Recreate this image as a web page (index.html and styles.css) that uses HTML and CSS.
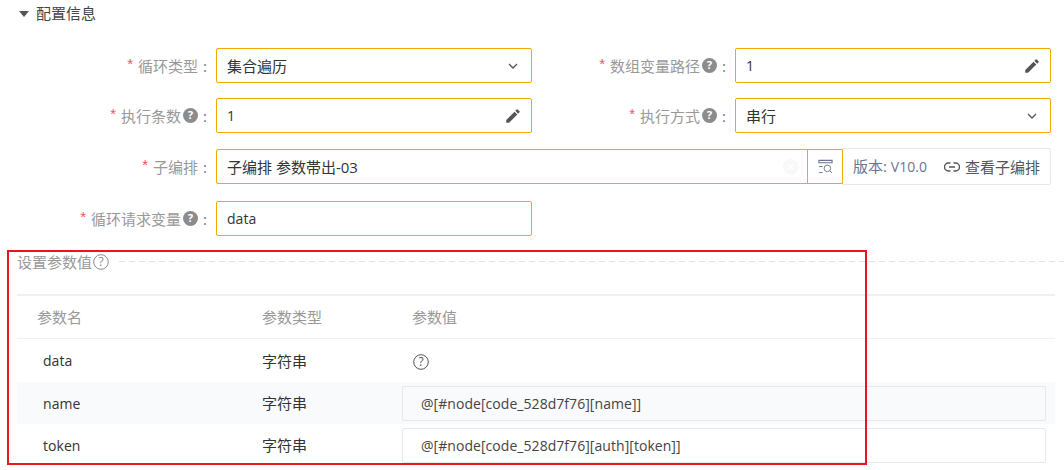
FILE: index.html
```html
<!DOCTYPE html>
<html lang="zh">
<head>
<meta charset="utf-8">
<title>配置信息</title>
<link rel="stylesheet" href="styles.css">
</head>
<body>
<main class="page">
  <header class="section-head">
    <svg class="caret" viewBox="0 0 10 6" width="10" height="6"><path d="M0 0h10L5 6z" fill="#555"/></svg>
    <span>配置信息</span>
  </header>

  <section class="form">
    <div class="row">
      <div class="field">
        <label class="label"><i class="req">*</i>循环类型<b class="colon">:</b></label>
        <div class="control">
          <span class="val">集合遍历</span>
          <svg class="chev" viewBox="0 0 10 6" width="10" height="6"><path d="M1 1l4 4 4-4" fill="none" stroke="#555" stroke-width="1.3"/></svg>
        </div>
      </div>
      <div class="field">
        <label class="label"><i class="req">*</i>数组变量路径<svg class="qf" viewBox="0 0 16 16" width="15" height="15"><circle cx="8" cy="8" r="8" fill="#8c8c8c"/><text x="8" y="12" text-anchor="middle">?</text></svg><b class="colon">:</b></label>
        <div class="control">
          <span class="val latin">1</span>
          <svg class="pen" viewBox="0 0 24 24" width="18" height="18"><path fill="#555" d="M3 17.25V21h3.75L17.81 9.94l-3.75-3.75L3 17.25zM20.71 7.04a1 1 0 0 0 0-1.41l-2.34-2.34a1 1 0 0 0-1.41 0l-1.83 1.83 3.75 3.75 1.83-1.83z"/></svg>
        </div>
      </div>
    </div>

    <div class="row">
      <div class="field">
        <label class="label"><i class="req">*</i>执行条数<svg class="qf" viewBox="0 0 16 16" width="15" height="15"><circle cx="8" cy="8" r="8" fill="#8c8c8c"/><text x="8" y="12" text-anchor="middle">?</text></svg><b class="colon">:</b></label>
        <div class="control">
          <span class="val latin">1</span>
          <svg class="pen" viewBox="0 0 24 24" width="18" height="18"><path fill="#555" d="M3 17.25V21h3.75L17.81 9.94l-3.75-3.75L3 17.25zM20.71 7.04a1 1 0 0 0 0-1.41l-2.34-2.34a1 1 0 0 0-1.41 0l-1.83 1.83 3.75 3.75 1.83-1.83z"/></svg>
        </div>
      </div>
      <div class="field">
        <label class="label"><i class="req">*</i>执行方式<svg class="qf" viewBox="0 0 16 16" width="15" height="15"><circle cx="8" cy="8" r="8" fill="#8c8c8c"/><text x="8" y="12" text-anchor="middle">?</text></svg><b class="colon">:</b></label>
        <div class="control">
          <span class="val">串行</span>
          <svg class="chev" viewBox="0 0 10 6" width="10" height="6"><path d="M1 1l4 4 4-4" fill="none" stroke="#555" stroke-width="1.3"/></svg>
        </div>
      </div>
    </div>

    <div class="row row-wide">
      <label class="label"><i class="req">*</i>子编排<b class="colon">:</b></label>
      <div class="control control-wide">
        <span class="val">子编排 参数帯出-03</span>
        <span class="clear"><svg viewBox="0 0 16 16" width="16" height="16"><circle cx="8" cy="8" r="8" fill="#f8f8f8"/><path d="M5.500 5.500l5 5m0-5l-5 5" stroke="#fff" stroke-width="1.400"/></svg></span>
        <span class="pick">
          <svg viewBox="0 0 16 16" width="15" height="15" fill="none" stroke="#6b7690"><path d="M1 1.500h14v2.500H1z" stroke-width="1.200"/><path d="M1 8h4M1 14.500h4" stroke-width="1"/><circle cx="10" cy="10" r="3.500" stroke-width="1"/><path d="M12.500 12.500l2.500 2.500" stroke-width="1"/></svg>
        </span>
      </div>
      <div class="addon">
        <span class="ver">版本: <span class="latin">V10.0</span></span>
        <span class="view">
          <svg viewBox="0 0 16 10" width="16" height="10" fill="none" stroke="#555" stroke-width="1.400"><path d="M6.500 1H4.500a4 4 0 0 0 0 8h2M9.500 1h2a4 4 0 0 1 0 8h-2M5 5h6"/></svg>
          查看子编排
        </span>
      </div>
    </div>

    <div class="row row-last">
      <div class="field">
        <label class="label"><i class="req">*</i>循环请求变量<svg class="qf" viewBox="0 0 16 16" width="15" height="15"><circle cx="8" cy="8" r="8" fill="#8c8c8c"/><text x="8" y="12" text-anchor="middle">?</text></svg><b class="colon">:</b></label>
        <div class="control"><span class="val latin">data</span></div>
      </div>
    </div>
  </section>

  <section class="params">
    <div class="divider">
      <span class="divider-title">设置参数值<svg viewBox="0 0 16 16" width="16" height="16" fill="none"><circle cx="8" cy="8" r="7.300" stroke="#8c8c8c"/><text x="8" y="12" text-anchor="middle" class="qo">?</text></svg></span>
      <span class="dash"></span>
    </div>
    <div class="table">
      <div class="tr th">
        <span class="c1">参数名</span><span class="c2">参数类型</span><span class="c3">参数值</span>
      </div>
      <div class="tr td">
        <span class="c1 name latin">data</span><span class="c2">字符串</span>
        <span class="c3 qcell"><svg viewBox="0 0 16 16" width="16" height="16" fill="none"><circle cx="8" cy="8" r="7.300" stroke="#555"/><text x="8" y="12" text-anchor="middle" class="qd">?</text></svg></span>
      </div>
      <div class="tr td alt">
        <span class="c1 name latin nudge">name</span><span class="c2">字符串</span>
        <span class="c3 inbox latin">@[#node[code_528d7f76][name]]</span>
      </div>
      <div class="tr td">
        <span class="c1 name latin nudge">token</span><span class="c2">字符串</span>
        <span class="c3 inbox latin">@[#node[code_528d7f76][auth][token]]</span>
      </div>
    </div>
  </section>
  <div class="highlight"></div>
</main>
</body>
</html>
```
FILE: styles.css
```css
* { box-sizing: border-box; }
html, body { margin: 0; padding: 0; background: #fff; overflow: hidden; }
body { width: 1064px; height: 470px; font: 15px/20px "Open Sans", "Noto Sans CJK SC", sans-serif; color: #333; }
.page { position: relative; height: 470px; overflow: hidden; }
.latin { font-size: 14px; letter-spacing: .05px; }

.section-head { display: flex; align-items: center; gap: 7px; height: 28px; padding-left: 19px; color: #444; }
.section-head span { position: relative; top: -1px; }

.form { padding-top: 20px; }
.row { display: flex; height: 35px; margin-bottom: 15px; }
.row:nth-child(2) { margin-bottom: 16px; }
.row-wide { margin-bottom: 17px; }
.row-last { margin-bottom: 0; }
.field { display: flex; }
.field + .field .label { width: 203px; }
.label { width: 216px; display: flex; align-items: center; justify-content: flex-end; color: #999; padding-right: 8px; white-space: nowrap; }
.req { color: #f5515f; font-style: normal; margin-right: 5px; font-family: "Liberation Sans", sans-serif; position: relative; top: -2px; }
.colon { font-weight: 400; color: #6b7690; margin-left: 5px; width: 5px; }
.qf { margin-left: 2px; }
.qf text { font: 700 12px "Open Sans", sans-serif; fill: #fff; }
.control { width: 316px; height: 35px; border: 1px solid #f5a800; border-radius: 2px; display: flex; align-items: center; justify-content: space-between; padding: 0 12px 0 10px; color: #333; }
.control-wide { width: 627px; padding-right: 0; border-radius: 2px 0 0 2px; }
.chev { margin-right: 1px; }
.pen { margin-right: -3px; }
.clear { margin-left: auto; display: flex; margin-right: 8px; }
.pick { width: 35px; height: 33px; border-left: 1px solid #f5a800; display: flex; align-items: center; justify-content: center; }
.addon { width: 208px; height: 37px; margin-top: -1px; border: 1px solid #e8e8e8; border-left: 0; border-radius: 0 2px 2px 0; display: flex; align-items: center; justify-content: space-between; padding: 0 10px; }
.ver { color: #6b7690; }
.view { display: flex; align-items: center; gap: 5px; color: #555; }

.params { margin-top: 14px; padding-left: 17px; }
.divider { display: flex; align-items: center; height: 24px; }
.divider-title { display: flex; align-items: center; color: #999; }
.divider-title svg { margin-left: 1px; }
.qo { font: 12px "Open Sans", sans-serif; fill: #8c8c8c; }
.qd { font: 12px "Open Sans", sans-serif; fill: #555; }
.dash { flex: none; width: 945px; height: 1px; margin: -1px 0 0 10px; background: repeating-linear-gradient(90deg, #e2e2e2 0 6px, transparent 6px 10px); }

.table { margin-top: 20px; width: 1038px; border-top: 2px solid #f0f0f0; }
.tr { display: flex; align-items: center; height: 43px; }
.th { border-bottom: 1px solid #f0f0f0; color: #999; }
.td { height: 42px; }
.td:nth-child(2) { height: 43px; }
.alt { background: #f9fafc; }
.c1 { width: 245px; padding-left: 20px; flex: none; }
.name { padding-left: 26px; }
.nudge { padding-top: 2px; }
.c2 { width: 150px; flex: none; }
.c3 { flex: none; }
.qcell { display: flex; padding: 3px 0 0 1px; }
.inbox { width: 644px; height: 35px; margin-left: -10px; padding: 1px 0 0 18px; border: 1px solid #e8e8e8; border-radius: 2px; display: flex; align-items: center; color: #444; }

.highlight { position: absolute; left: 7px; top: 250px; width: 860px; height: 215px; border: 2px solid #e8141f; pointer-events: none; }
```
